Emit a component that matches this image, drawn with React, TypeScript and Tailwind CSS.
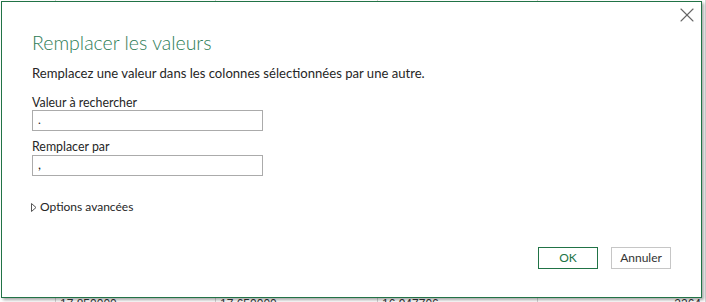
import { X } from 'lucide-react'

const cols = [
  { w: 56, text: '' },
  { w: 160, text: '17.850000' },
  { w: 162, text: '17.650000' },
  { w: 160, text: '16.947706' },
  { w: 168, text: '2264', right: true },
]

export default function App() {
  return (
    <div
      className="relative w-[706px] h-[302px] overflow-hidden bg-white"
      style={{ fontFamily: 'Lato, "Noto Sans", sans-serif' }}
    >
      {/* spreadsheet behind the dialog */}
      <div className="flex h-full">
        {cols.map((c, i) => (
          <div
            key={i}
            className="h-full border-r border-[#d4d4d4] flex flex-col justify-end shrink-0"
            style={{ width: c.w }}
          >
            <div
              className={`text-[12px] leading-none text-[#333] px-[4px] translate-y-[8px] ${c.right ? 'text-right pr-[4px]' : ''}`}
              style={{ fontFamily: '"Liberation Sans", Arial, sans-serif' }}
            >
              {c.text}
            </div>
          </div>
        ))}
      </div>

      {/* dialog */}
      <div className="absolute left-[1px] top-[1px] w-[701px] h-[297px] bg-white border border-[#217346] shadow-[2px_2px_3px_rgba(0,0,0,0.35)] flex flex-col">
        <div className="flex justify-end items-start h-[23px] pt-[1px] pr-[2px]">
          <X className="w-[24px] h-[24px] text-[#666] shrink-0" strokeWidth={1.1} />
        </div>

        <div className="pl-[30px] pr-[30px] flex flex-col items-start">
          <h1 className="text-[19.5px] font-light leading-none text-[#2e7d57] mt-[8px]">
            Remplacer les valeurs
          </h1>
          <p className="text-[13.1px] text-[#262626] mt-[14px] leading-none">
            Remplacez une valeur dans les colonnes sélectionnées par une autre.
          </p>

          <div className="text-[12.4px] text-[#262626] mt-[17px] leading-none">Valeur à rechercher</div>
          <div className="mt-[1px] w-[231px] h-[21px] border border-[#ababab] text-[12px] leading-none pl-[5px] pt-[3px] text-[#262626]">
            .
          </div>

          <div className="text-[12.4px] text-[#262626] mt-[10px] leading-none">Remplacer par</div>
          <div className="mt-[2px] w-[231px] h-[21px] border border-[#ababab] text-[13px] leading-none pl-[5px] pt-[2px] text-[#262626]">
            ,
          </div>

          <div className="flex items-center gap-[3px] -ml-[1px] mt-[25px] text-[12px] text-[#262626] leading-none">
            <svg width="6" height="9" viewBox="0 0 6 9" className="shrink-0">
              <path d="M0.5 0.5 L5 4.5 L0.5 8.5 Z" fill="none" stroke="#555" strokeWidth="1" />
            </svg>
            <span>Options avancées</span>
          </div>
        </div>

        <div className="flex justify-end gap-[13px] pr-[30px] mt-auto mb-[28px]">
          <button className="w-[60px] h-[22px] border border-[#217346] text-[12px] text-[#217346] leading-none bg-white">
            OK
          </button>
          <button className="w-[60px] h-[22px] border border-[#c6c6c6] text-[12px] text-[#333] leading-none bg-white">
            Annuler
          </button>
        </div>
      </div>
    </div>
  )
}
